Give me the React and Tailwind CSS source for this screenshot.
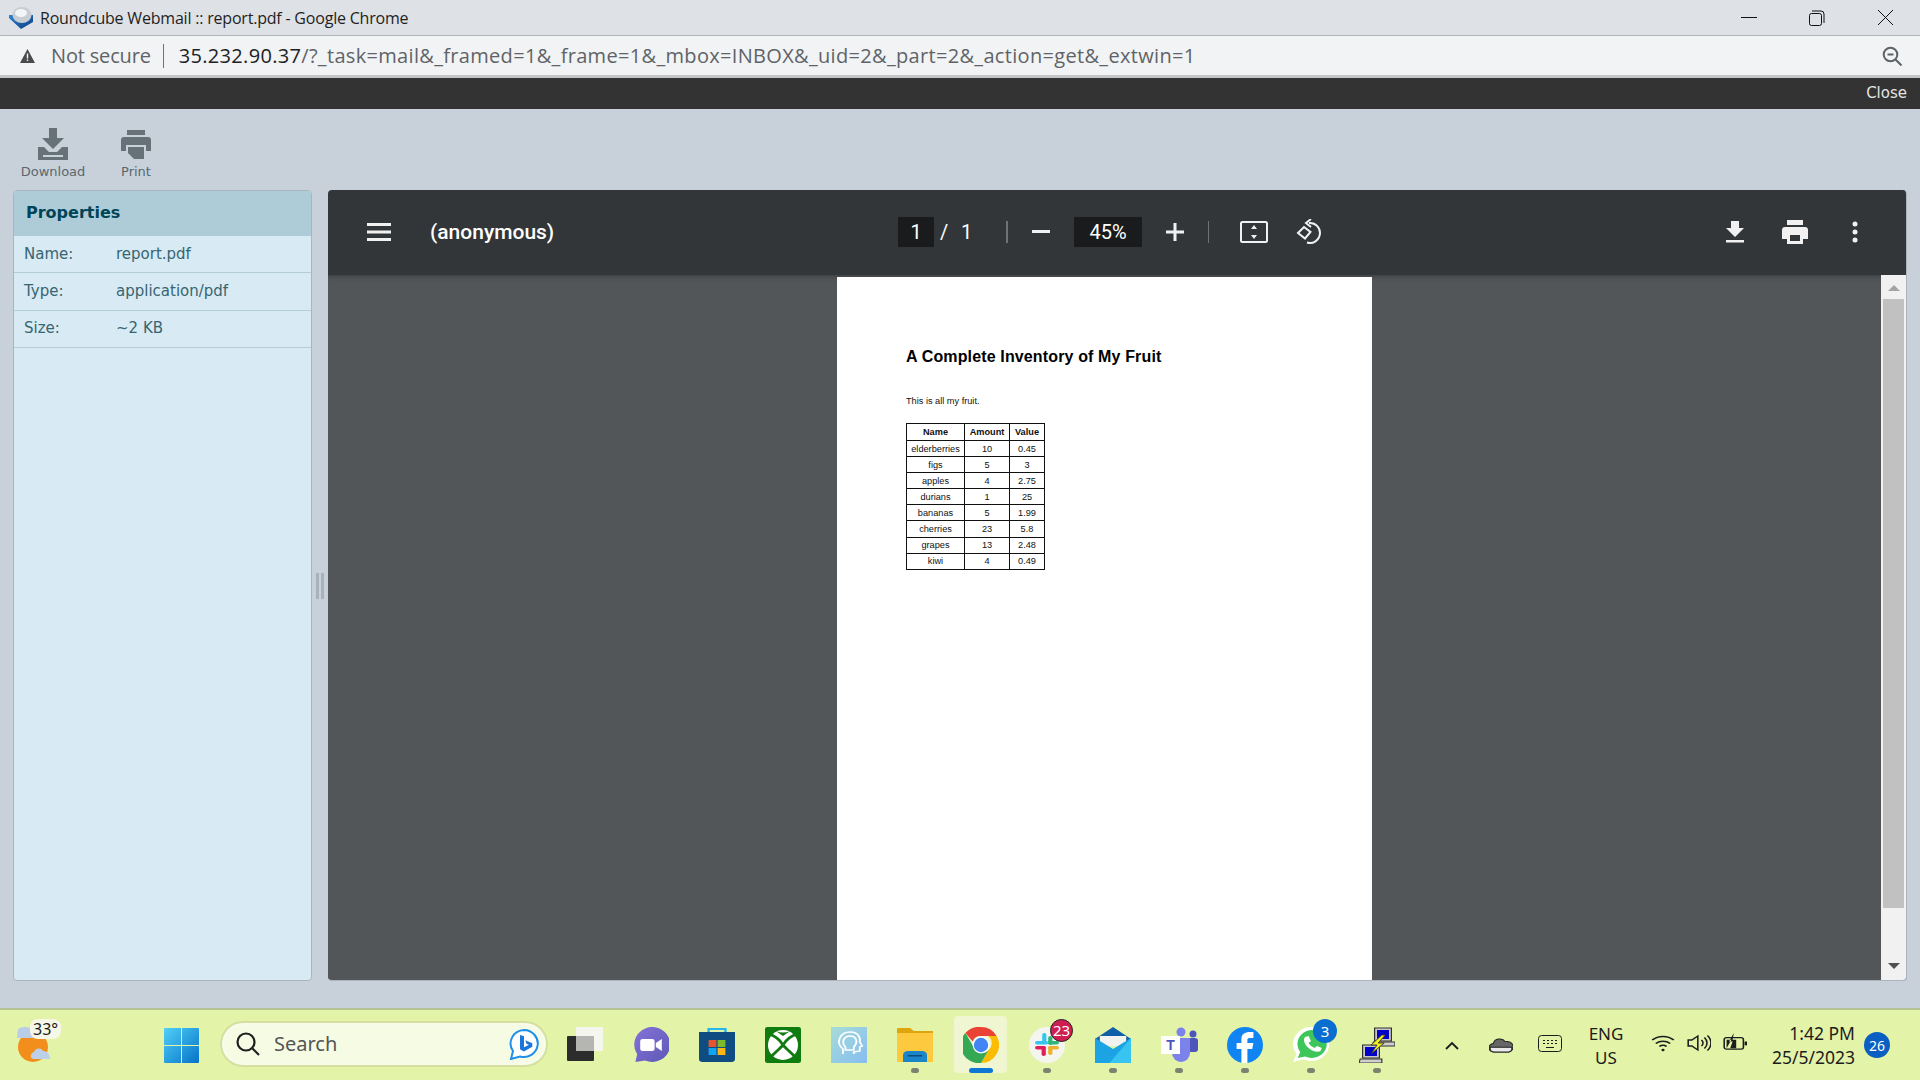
import React from 'react';

const rows = [
  ['elderberries', '10', '0.45'],
  ['figs', '5', '3'],
  ['apples', '4', '2.75'],
  ['durians', '1', '25'],
  ['bananas', '5', '1.99'],
  ['cherries', '23', '5.8'],
  ['grapes', '13', '2.48'],
  ['kiwi', '4', '0.49'],
];

const props = [
  ['Name:', 'report.pdf'],
  ['Type:', 'application/pdf'],
  ['Size:', '~2 KB'],
];

const Slot = ({ children, dot }) => (
  <div className="relative w-[66px] h-[71px] flex items-center justify-center shrink-0">
    {children}
    {dot && <span className="absolute top-[59px] left-1/2 -translate-x-1/2 w-[8px] h-[5px] rounded-full bg-[#7d8370]" />}
  </div>
);

const Badge = ({ children, className = '' }) => (
  <span className={`absolute flex items-center justify-center rounded-full text-white text-[15px] ${className}`}>{children}</span>
);

// taskbar art is drawn on a 30x36 grid and stretched to a 36px square
const Art = ({ children }) => (
  <svg width="36" height="36" viewBox="0 0 30 36" preserveAspectRatio="none">{children}</svg>
);

const WeatherIcon = () => (
  <svg width="38" height="42" viewBox="0 0 38 42">
    <circle cx="18" cy="24" r="15" fill="#f28f1c" />
    <path d="M3 6c3-2 8-3 12-1 3 2 6 5 6 10H2z" fill="#b9cde6" />
    <path d="M18 36c-3-1-3-6 1-7 1-4 7-5 9-1 3 0 7 2 7 8z" fill="#bcd0ec" />
  </svg>
);

const WindowsLogo = () => (
  <svg width="35" height="35" viewBox="0 0 35 35">
    <defs>
      <linearGradient id="wl" x1="0" y1="0" x2="1" y2="1">
        <stop offset="0" stopColor="#4fd0f8" />
        <stop offset="1" stopColor="#0672c8" />
      </linearGradient>
    </defs>
    <path d="M1 0h16v17H0V1a1 1 0 0 1 1-1zM18 0h16a1 1 0 0 1 1 1v16H18zM0 18h17v17H1a1 1 0 0 1-1-1zM18 18h17v16a1 1 0 0 1-1 1H18z" fill="url(#wl)" />
  </svg>
);

const BingIcon = () => (
  <svg width="30" height="31" viewBox="0 0 30 31">
    <path d="M15 1a14 13.500 0 1 1-4 26.500L2 30l2-8A14 13.500 0 0 1 15 1z" fill="#fff" stroke="#1f8fe8" strokeWidth="2" />
    <path d="M11 6l4 1.300v11l5-2.500-2.500-1-1.200-3.500 7 3v3.500l-8.500 4.700-3.800-2.200z" fill="#1b74dc" />
  </svg>
);

const TaskViewIcon = () => (
  <svg width="36" height="35" viewBox="0 0 36 35">
    <rect x="0" y="9" width="27" height="25" rx="1" fill="#2c2c2c" />
    <rect x="9" y="0" width="27" height="24" rx="1" fill="#f6f6f4" fillOpacity="0.9" />
    <rect x="9" y="9" width="18" height="15" fill="#b5b5b2" />
  </svg>
);

const ChatIcon = () => (
  <Art>
    <defs>
      <linearGradient id="ch" x1="0" y1="0" x2="1" y2="1">
        <stop offset="0" stopColor="#8672d8" />
        <stop offset="1" stopColor="#5c59b5" />
      </linearGradient>
    </defs>
    <path d="M15 0a15 17.500 0 1 1-5 33.500L2 35l1.500-8A15 17.500 0 0 1 15 0z" fill="url(#ch)" />
    <rect x="6" y="12" width="12" height="12" rx="2" fill="#fff" />
    <path d="M19 16l5-4v12l-5-4z" fill="#fff" />
  </Art>
);

const StoreIcon = () => (
  <Art>
    <path d="M8 7V2h14v5" fill="none" stroke="#27b7ea" strokeWidth="2" />
    <path d="M0 5h30v27a3 3 0 0 1-3 3H3a3 3 0 0 1-3-3z" fill="#0f4c81" />
    <rect x="8" y="13" width="6.500" height="7" fill="#e8552c" />
    <rect x="15.500" y="13" width="6.500" height="7" fill="#7fba2a" />
    <rect x="8" y="21" width="6.500" height="7" fill="#12a5ee" />
    <rect x="15.500" y="21" width="6.500" height="7" fill="#fbb614" />
  </Art>
);

const XboxIcon = () => (
  <Art>
    <rect width="30" height="36" rx="2" fill="#107c10" />
    <ellipse cx="15" cy="18" rx="12.500" ry="15" fill="#fff" />
    <path d="M3 7C9 9 13 14 15 18 17 14 21 9 27 7M4 31C8 26 13 21 15 18 17 21 22 26 26 31" fill="none" stroke="#107c10" strokeWidth="2.500" />
    <path d="M9 4c4 2 8 2 12 0l-6 5z" fill="#107c10" />
  </Art>
);

const HeadIcon = () => (
  <Art>
    <defs>
      <linearGradient id="hd" x1="0" y1="0" x2="1" y2="1">
        <stop offset="0" stopColor="#a7dcd8" />
        <stop offset="1" stopColor="#86bdf0" />
      </linearGradient>
    </defs>
    <rect width="30" height="36" fill="url(#hd)" />
    <path d="M10 27v-5c-7-7-2-17 6-17 6 0 9 5 8 10l2 4-2 1v4l-5 1v2" fill="none" stroke="#fff" strokeWidth="1.500" />
    <path d="M12 20c-4-5-1-11 4-11s7 6 3 11v3h-7z" fill="none" stroke="#fff" strokeWidth="1.500" />
  </Art>
);

const FolderIcon = () => (
  <Art>
    <path d="M1 1h10l3 3h16v30H0V2a1 1 0 0 1 1-1z" fill="#dfa50e" />
    <rect x="0" y="6" width="30" height="29" fill="#fdc93f" />
    <path d="M5 35v-7a4 4 0 0 1 4-4h12a4 4 0 0 1 4 4v7z" fill="#1b85c9" />
    <rect x="9" y="28" width="12" height="1.500" fill="#0d4d7a" />
  </Art>
);

const ChromeIcon = () => (
  <svg width="36" height="36" viewBox="0 0 30 30">
    <path d="M15 0a15 15 0 0 1 13 7.500H15a7.500 7.500 0 0 0-7 4.500L2 5A15 15 0 0 1 15 0z" fill="#ea4335" />
    <path d="M28 7.500A15 15 0 0 1 15 30l6.500-11A7.500 7.500 0 0 0 21 7.500z" fill="#fbbc04" />
    <path d="M15 30A15 15 0 0 1 2 5l6.500 11A7.500 7.500 0 0 0 21.500 19z" fill="#34a853" />
    <circle cx="15" cy="15" r="7" fill="#fff" />
    <circle cx="15" cy="15" r="6" fill="#4285f4" />
  </svg>
);

const SlackIcon = () => (
  <Art>
    <ellipse cx="15" cy="18" rx="15" ry="18" fill="#f5f5ef" />
    <rect x="11" y="6" width="3.500" height="11" rx="1.750" fill="#36c5f0" />
    <rect x="5" y="14" width="11" height="3.500" rx="1.750" fill="#36c5f0" />
    <rect x="16" y="9" width="3.500" height="9" rx="1.750" fill="#2eb67d" />
    <rect x="16" y="14" width="9" height="3.500" rx="1.750" fill="#2eb67d" />
    <rect x="16" y="19" width="9" height="3.500" rx="1.750" fill="#ecb22e" />
    <rect x="16" y="19" width="3.500" height="9" rx="1.750" fill="#ecb22e" />
    <rect x="5" y="19" width="9" height="3.500" rx="1.750" fill="#e01e5a" />
    <rect x="10.500" y="19" width="3.500" height="10" rx="1.750" fill="#e01e5a" />
  </Art>
);

const MailIcon = () => (
  <Art>
    <path d="M0 12L15 0l15 12v4H0z" fill="#0f5fa8" />
    <path d="M4 9h22v10H4z" fill="#f2f2f0" />
    <path d="M0 11l15 11 15-11v25H0z" fill="#1ca3e4" />
    <path d="M30 11v25H12z" fill="#37c4f0" />
  </Art>
);

const TeamsIcon = () => (
  <svg width="37" height="35" viewBox="0 0 37 35">
    <circle cx="20" cy="5" r="4.500" fill="#7b83eb" />
    <circle cx="32" cy="7" r="3.500" fill="#4d55bd" />
    <rect x="27" y="11" width="10" height="14" rx="3" fill="#4d55bd" />
    <path d="M11 11h18v15a9 9 0 0 1-18 0z" fill="#7b83eb" />
    <rect x="0" y="9" width="19" height="18" fill="#fff" />
    <text x="9.500" y="23" textAnchor="middle" fontSize="14" fontWeight="700" fill="#4d55bd" fontFamily="Liberation Sans, sans-serif">T</text>
  </svg>
);

const FacebookIcon = () => (
  <Art>
    <ellipse cx="15" cy="18" rx="15" ry="18" fill="#0f84f2" />
    <path d="M12 36V22H8v-6h4v-4c0-5 3-7 7-7h3v6h-3c-2 0-2 1-2 2v3h5l-1 6h-4v14z" fill="#fff" />
  </Art>
);

const WhatsappIcon = () => (
  <Art>
    <path d="M15 0a15 17 0 1 1-6 32.500L0 35l3-8A15 17 0 0 1 15 0z" fill="#fff" />
    <path d="M15 3a12.500 14 0 1 1-5 26.500L4 31l2-6A12.500 14 0 0 1 15 3z" fill="#3fc65a" />
    <path d="M10 10l3-1 2 5-2 2c1 2 3 4 5 5l2-2 4 2-1 3c-3 2-7 0-10-3s-5-8-3-11z" fill="#fff" />
  </Art>
);

const PuttyIcon = () => (
  <Art>
    <rect x="13" y="1" width="14" height="13" fill="#c9c9c9" stroke="#333" />
    <rect x="15" y="3" width="10" height="9" fill="#0000c8" />
    <path d="M12 15h18v4H11z" fill="#d0d0d0" stroke="#333" />
    <rect x="3" y="18" width="14" height="13" fill="#c9c9c9" stroke="#333" />
    <rect x="5" y="20" width="10" height="9" fill="#0000c8" />
    <path d="M1 32h18v4H0z" fill="#d0d0d0" stroke="#333" />
    <path d="M19 8l-9 10h5l-5 9 11-11h-5l6-8z" fill="#f2ee18" stroke="#333" strokeWidth="0.800" />
  </Art>
);

const RoundcubeLogo = () => (
  <svg width="24" height="22" viewBox="0 0 24 22">
    <defs>
      <linearGradient id="rc" x1="0" y1="0" x2="1" y2="1">
        <stop offset="0" stopColor="#2f85d0" />
        <stop offset="1" stopColor="#0a3f7e" />
      </linearGradient>
    </defs>
    <path d="M0 11l12 11 12-7V8H0z" fill="url(#rc)" />
    <ellipse cx="13" cy="8" rx="9.500" ry="8" fill="#c9ced4" />
    <ellipse cx="12" cy="6" rx="6" ry="4" fill="#f4f5f6" />
  </svg>
);

const App = () => (
  <div className="w-[1920px] h-[1080px] overflow-hidden flex flex-col bg-[#c8d1da] font-['Noto_Sans',sans-serif]">
    {/* chrome title bar */}
    <div className="h-[36px] shrink-0 bg-[#dee1e6] border-b border-[#b2b3b5] flex items-center pl-[9px]">
      <RoundcubeLogo />
      <span className="ml-[7px] text-[16px] text-[#1f1f1f] font-['Open_Sans',sans-serif] tracking-[-0.2px]">Roundcube Webmail :: report.pdf - Google Chrome</span>
      <div className="ml-auto flex items-center pr-[26px] gap-[52px]">
        <svg width="16" height="2" viewBox="0 0 16 2"><rect width="16" height="1" fill="#111" /></svg>
        <svg width="16" height="16" viewBox="0 0 16 16" fill="none" stroke="#111"><rect x="0.500" y="3.500" width="12" height="12" rx="2" /><path d="M3 1h9a3 3 0 0 1 3 3v9" /></svg>
        <svg width="17" height="17" viewBox="0 0 17 17" stroke="#111" strokeWidth="1"><path d="M1 1l15 15M16 1L1 16" /></svg>
      </div>
    </div>

    {/* address bar */}
    <div className="h-[39px] shrink-0 bg-[#f1f3f4] flex items-center pl-[20px] pr-[18px]">
      <svg width="15" height="14" viewBox="0 0 15 14"><path d="M7.500 0L15 14H0z" fill="#4a4a4a" /><rect x="6.800" y="4.500" width="1.400" height="5" fill="#f1f3f4" /><rect x="6.800" y="10.500" width="1.400" height="1.500" fill="#f1f3f4" /></svg>
      <span className="ml-[16px] text-[20px] text-[#5f6368] font-['Open_Sans',sans-serif] tracking-[-0.17px]">Not secure</span>
      <span className="ml-[12px] w-[1px] h-[24px] bg-[#70757a]" />
      <span className="ml-[15px] text-[20px] text-[#5f6368] font-['Open_Sans',sans-serif] tracking-[0.32px]"><span className="text-[#202124]">35.232.90.37</span>/?_task=mail&amp;_framed=1&amp;_frame=1&amp;_mbox=INBOX&amp;_uid=2&amp;_part=2&amp;_action=get&amp;_extwin=1</span>
      <svg className="ml-auto" width="20" height="20" viewBox="0 0 20 20" fill="none" stroke="#5f6368" strokeWidth="2"><circle cx="8.500" cy="8.500" r="6.800" /><path d="M13.500 13.500l6 6M5.500 8.500h6" /></svg>
    </div>
    <div className="h-[3px] shrink-0 bg-[#c4c6c8]" />

    {/* dark close bar */}
    <div className="h-[31px] shrink-0 bg-[#333333] flex items-center justify-end pr-[13px]">
      <span className="text-[15px] text-[#e4e4e4] font-['DejaVu_Sans',sans-serif]">Close</span>
    </div>

    {/* webmail toolbar */}
    <div className="h-[81px] shrink-0 flex items-start pl-[19px] pt-[19px]">
      <div className="flex flex-col items-center w-[68px]">
        <svg width="30" height="32" viewBox="0 0 30 32" fill="#677278"><path d="M11 0h8v10h7L15 21 4 10h7z" /><path d="M0 19h6l5 5h8l5-5h6v13H0zM5 27v2h20v-2z" fillRule="evenodd" /></svg>
        <span className="text-[13px] leading-[16px] mt-[4px] text-[#5b676d] font-['DejaVu_Sans',sans-serif]">Download</span>
      </div>
      <div className="flex flex-col items-center w-[56px] ml-[21px]">
        <svg width="30" height="32" viewBox="0 0 30 32" fill="#677278"><rect x="6" y="2" width="18" height="5" /><path d="M3 9h24a3 3 0 0 1 3 3v11h-5v-6H5v6H0V12a3 3 0 0 1 3-3z" /><path d="M7 19h16v12H13l-6-6z" /></svg>
        <span className="text-[13px] leading-[16px] mt-[4px] text-[#5b676d] font-['DejaVu_Sans',sans-serif]">Print</span>
      </div>
    </div>

    {/* main */}
    <div className="h-[791px] shrink-0 flex pl-[13px]">
      <div className="w-[299px] shrink-0 bg-[#d8eaf3] border border-[#a9b6c0] rounded-[4px] overflow-hidden font-['DejaVu_Sans',sans-serif]">
        <div className="h-[45px] bg-[#aeccd8] flex items-center pl-[12px] pb-[2px] text-[16px] font-bold text-[#004458]">Properties</div>
        {props.map(([label, value]) => (
          <div key={label} className="h-[37.300px] flex items-center border-b border-[#b4ced9] pl-[10px] text-[15px] text-[#376572]">
            <span className="w-[92px]">{label}</span>
            <span>{value}</span>
          </div>
        ))}
      </div>

      <div className="w-[16px] shrink-0 flex items-center justify-center gap-[2px]">
        <span className="w-[3px] h-[26px] bg-[#a8b2bb]" />
        <span className="w-[3px] h-[26px] bg-[#a8b2bb]" />
      </div>

      <div className="w-[1579px] shrink-0 flex flex-col rounded-[4px] overflow-hidden border-b border-r border-[#aab5bf]">
        {/* pdf toolbar */}
        <div className="h-[85px] shrink-0 bg-[#323639] flex items-center pl-[39px] pb-[2px] font-['Roboto',sans-serif] text-white">
          <svg width="24" height="18" viewBox="0 0 24 18" fill="#f1f1f1"><rect width="24" height="3" /><rect y="7.500" width="24" height="3" /><rect y="15" width="24" height="3" /></svg>
          <span className="ml-[39px] text-[21px] leading-[24px] font-medium w-[468px]">(anonymous)</span>
          <span className="w-[36px] h-[30px] bg-[#191b1c] flex items-center justify-center text-[20px]">1</span>
          <span className="ml-[6px] text-[20px] w-[21px]">/</span>
          <span className="text-[20px] w-[45px]">1</span>
          <span className="w-[2px] h-[22px] bg-[#6f7275]" />
          <svg className="ml-[24px]" width="18" height="3" viewBox="0 0 18 3" fill="#f1f1f1"><rect width="18" height="3" /></svg>
          <span className="ml-[24px] w-[68px] h-[30px] bg-[#191b1c] flex items-center justify-center text-[20px]">45%</span>
          <svg className="ml-[24px]" width="18" height="18" viewBox="0 0 18 18" fill="#f1f1f1"><rect y="7.500" width="18" height="3" /><rect x="7.500" width="3" height="18" /></svg>
          <span className="ml-[24px] w-[1px] h-[22px] bg-[#6f7275]" />
          <svg className="ml-[31px]" width="28" height="22" viewBox="0 0 28 22" fill="none" stroke="#f1f1f1" strokeWidth="2"><rect x="1" y="1" width="26" height="20" rx="1.500" /><path d="M14 4l3 4h-6zM14 18l3-4h-6z" fill="#f1f1f1" stroke="none" /></svg>
          <svg className="ml-[28px]" width="26" height="26" viewBox="0 0 26 26" fill="none" stroke="#f1f1f1" strokeWidth="2"><path d="M8 8l6.500 5-5.500 6.500L2 14z" /><path d="M13 4a10 10 0 1 1-2 19.500" /><path d="M15 0l-5 4 5 4" /></svg>
          <svg className="ml-[404px]" width="18" height="22" viewBox="0 0 18 22" fill="#f1f1f1"><path d="M5 0h8v7h5l-9 9-9-9h5z" /><rect y="19" width="18" height="2.500" /></svg>
          <svg className="ml-[38px]" width="26" height="24" viewBox="0 0 26 24" fill="#f1f1f1"><rect x="5" width="16" height="5" /><path d="M3 7h20a3 3 0 0 1 3 3v9h-5v5H5v-5H0v-9a3 3 0 0 1 3-3zM8 15v6h10v-6z" fillRule="evenodd" /></svg>
          <svg className="ml-[44px]" width="6" height="22" viewBox="0 0 6 22" fill="#f1f1f1"><circle cx="3" cy="3" r="2.500" /><circle cx="3" cy="11" r="2.500" /><circle cx="3" cy="19" r="2.500" /></svg>
        </div>

        {/* pdf viewer */}
        <div className="flex-1 flex bg-[#525659] min-h-0">
          <div className="flex-1 flex justify-center pt-[2px] shadow-[inset_0_6px_6px_-6px_rgba(0,0,0,0.4)]">
            <div className="w-[535px] h-[703px] bg-white pl-[69px] pt-[70px] font-['Liberation_Sans',sans-serif] text-black">
              <div className="text-[16px] font-bold leading-[20px] tracking-[0.14px]">A Complete Inventory of My Fruit</div>
              <div className="text-[9.200px] leading-[10px] mt-[29px] text-[#111]">This is all my fruit.</div>
              <table className="mt-[17px] border-collapse border border-[#111] text-[9.200px] leading-[10px] text-center text-[#111]">
                <thead>
                  <tr className="h-[17px]">
                    <th className="w-[58px] border border-[#111] p-0 font-bold">Name</th>
                    <th className="w-[45px] border border-[#111] p-0 font-bold">Amount</th>
                    <th className="w-[35px] border border-[#111] p-0 font-bold">Value</th>
                  </tr>
                </thead>
                <tbody>
                  {rows.map(([name, amount, value]) => (
                    <tr key={name} className="h-[16.100px]">
                      <td className="border border-[#111] p-0">{name}</td>
                      <td className="border border-[#111] p-0">{amount}</td>
                      <td className="border border-[#111] p-0">{value}</td>
                    </tr>
                  ))}
                </tbody>
              </table>
            </div>
          </div>
          <div className="w-[25px] shrink-0 bg-[#f1f1f1] flex flex-col items-center">
            <svg className="mt-[10px]" width="12" height="6" viewBox="0 0 12 6" fill="#a3a3a3"><path d="M6 0l6 6H0z" /></svg>
            <div className="w-[21px] h-[609px] bg-[#c1c1c1] mt-[8px]" />
            <svg className="mt-[55px]" width="12" height="6" viewBox="0 0 12 6" fill="#505050"><path d="M0 0h12L6 6z" /></svg>
          </div>
        </div>
      </div>
    </div>

    <div className="h-[27px] shrink-0" />

    {/* windows taskbar */}
    <div className="h-[72px] shrink-0 border-t-2 border-[#b5c293] bg-[#e3f3a8] flex items-start relative text-[#1c1c1c]">
      <div className="relative w-[66px] h-[70px] ml-[15px] shrink-0 pt-[13px]">
        <WeatherIcon />
        <span className="absolute top-[9px] left-[15px] px-[3px] rounded-[8px] bg-[#f6f7e6] text-[16px] leading-[20px]">33°</span>
      </div>
      <div className="ml-[83px] h-[70px] flex items-center"><WindowsLogo /></div>
      <div className="ml-[21px] mt-[11px] w-[328px] h-[46px] rounded-full bg-[#f6fbe4] border-2 border-[#d5e09f] flex items-center pl-[14px] pr-[7px] shadow-[inset_0_0_4px_rgba(255,255,255,0.8)]">
        <svg width="24" height="24" viewBox="0 0 24 24" fill="none" stroke="#1f1f1f" strokeWidth="2.200"><circle cx="10" cy="10" r="8.500" /><path d="M16.500 16.500l6.500 6.500" /></svg>
        <span className="ml-[14px] text-[20px] text-[#555]">Search</span>
        <span className="ml-auto"><BingIcon /></span>
      </div>
      <div className="flex items-start ml-[4px] mt-[-1px]">
        <Slot><TaskViewIcon /></Slot>
        <Slot><ChatIcon /></Slot>
        <Slot><StoreIcon /></Slot>
        <Slot><XboxIcon /></Slot>
        <Slot><HeadIcon /></Slot>
        <Slot dot><FolderIcon /></Slot>
        <Slot>
          <span className="absolute top-[7px] left-[6px] w-[50px] h-[57px] rounded-[4px] bg-[#f1f6d2] shadow-[3px_0_0_#eff5cd]" />
          <span className="relative flex"><ChromeIcon /></span>
          <span className="absolute top-[59px] left-[21px] w-[24px] h-[5px] rounded-full bg-[#0a78d4]" />
        </Slot>
        <Slot dot>
          <SlackIcon />
          <Badge className="top-[10px] left-[36px] w-[23px] h-[23px] bg-[#cf1f52] border border-[#222]">23</Badge>
        </Slot>
        <Slot dot><MailIcon /></Slot>
        <Slot dot><TeamsIcon /></Slot>
        <Slot dot><FacebookIcon /></Slot>
        <Slot dot>
          <WhatsappIcon />
          <Badge className="top-[10px] left-[35px] w-[24px] h-[24px] bg-[#0a6ed1]">3</Badge>
        </Slot>
        <Slot dot><PuttyIcon /></Slot>
      </div>
      <svg className="ml-[35px] mt-[31px]" width="14" height="9" viewBox="0 0 14 9" fill="none" stroke="#1c1c1c" strokeWidth="1.800"><path d="M1 8l6-6 6 6" /></svg>
      <svg className="ml-[30px] mt-[26px]" width="24" height="17" viewBox="0 0 22 18" preserveAspectRatio="none"><path d="M5 17a4.500 4.500 0 0 1-1-9 6 6 0 0 1 11-2 5 5 0 0 1 3 11z" fill="#666" stroke="#222" /><path d="M1 12h20v1a4 4 0 0 1-3 4H5a4 4 0 0 1-4-4z" fill="#e8e8e8" stroke="#222" /></svg>
      <svg className="ml-[25px] mt-[25px]" width="24" height="17" viewBox="0 0 24 17" fill="none" stroke="#1c1c1c"><rect x="0.500" y="0.500" width="23" height="16" rx="3" /><path d="M5 5.500h2M9 5.500h2M13 5.500h2M17 5.500h2M5 8.500h2M9 8.500h2M13 8.500h2M17 8.500h2M8 12.500h8" /></svg>
      <div className="w-[60px] ml-[14px] mt-[12px] text-center text-[17px] leading-[24px]">ENG<br />US</div>
      <svg className="ml-[15px] mt-[24px]" width="24" height="18" viewBox="0 0 20 18" preserveAspectRatio="none" fill="none" stroke="#1c1c1c" strokeWidth="1.500"><path d="M1 6a13 13 0 0 1 18 0M4 9.500a9 9 0 0 1 12 0M7 12.500a4.500 4.500 0 0 1 6 0" /><circle cx="10" cy="16" r="1.300" fill="#1c1c1c" stroke="none" /></svg>
      <svg className="ml-[12px] mt-[23px]" width="24" height="20" viewBox="0 0 20 20" preserveAspectRatio="none" fill="none" stroke="#1c1c1c" strokeWidth="1.300"><path d="M1 7h3l5-4v14l-5-4H1zM12 7a4 4 0 0 1 0 6M14.500 4.500a8 8 0 0 1 0 11M17 2.500a11 11 0 0 1 0 15" /></svg>
      <svg className="ml-[12px] mt-[22px]" width="24" height="21" viewBox="0 0 20 22" preserveAspectRatio="none"><rect x="1" y="6" width="16" height="12" rx="2" fill="none" stroke="#1c1c1c" strokeWidth="1.300" /><rect x="18" y="10" width="2" height="4" fill="#1c1c1c" /><path d="M3 17V8h4l-4 9zM9 1L5 10h3l-2 7h5V8H8z" fill="#1c1c1c" /></svg>
      <div className="ml-[18px] mt-[11px] w-[90px] text-right text-[17.500px] leading-[24px] whitespace-nowrap flex flex-col items-end">
        <span>1:42 PM</span>
        <span>25/5/2023</span>
      </div>
      <span className="ml-[9px] mt-[22px] w-[26px] h-[26px] rounded-full bg-[#0a5fc2] text-white text-[14px] flex items-center justify-center">26</span>
    </div>
  </div>
);

export default App;
